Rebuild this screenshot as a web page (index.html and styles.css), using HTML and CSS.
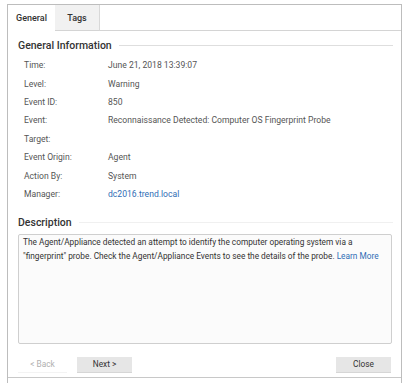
FILE: index.html
```html
<!DOCTYPE html>
<html>
<head>
<meta charset="utf-8">
<link rel="stylesheet" href="styles.css">
</head>
<body>
<div class="frame">
  <div class="tabs">
    <div class="tab active">General</div>
    <div class="tab">Tags</div>
    <div class="tab-rest"></div>
  </div>
  <div class="content">
    <div class="section-title"><span>General Information</span><div class="rule"></div></div>
    <div class="grid">
      <div class="lbl">Time:</div><div class="val">June 21, 2018 13:39:07</div>
      <div class="lbl">Level:</div><div class="val">Warning</div>
      <div class="lbl">Event ID:</div><div class="val">850</div>
      <div class="lbl">Event:</div><div class="val">Reconnaissance Detected: Computer OS Fingerprint Probe</div>
      <div class="lbl">Target:</div><div class="val"></div>
      <div class="lbl">Event Origin:</div><div class="val">Agent</div>
      <div class="lbl">Action By:</div><div class="val">System</div>
      <div class="lbl">Manager:</div><div class="val link">dc2016.trend.local</div>
    </div>
    <div class="section-title desc-title"><span>Description</span><div class="rule faint"></div></div>
    <div class="desc-box">The Agent/Appliance detected an attempt to identify the computer operating system via a "fingerprint" probe. Check the Agent/Appliance Events to see the details of the probe. <span class="link">Learn More</span></div>
  </div>
  <div class="footer">
    <div class="btn disabled">&lt; Back</div>
    <div class="btn">Next &gt;</div>
    <div class="spacer"></div>
    <div class="btn">Close</div>
  </div>
</div>
</body>
</html>
```
FILE: styles.css
```css
html, body {
  margin: 0;
  padding: 0;
  background: #fff;
}
body {
  font-family: Roboto, "Liberation Sans", sans-serif;
  color: #444;
}
.frame {
  margin: 4px 0 0 7px;
  width: 395px;
  height: 379px;
  border: 1px solid #bdbdbd;
  border-bottom: none;
  display: flex;
  flex-direction: column;
  box-sizing: border-box;
}
.tabs {
  display: flex;
  height: 26px;
  flex: none;
}
.tab {
  font-size: 9px;
  font-weight: 500;
  color: #333;
  display: flex;
  align-items: center;
  justify-content: center;
  box-sizing: border-box;
}
.tab.active {
  width: 47px;
  background: #fff;
}
.tab:not(.active) {
  width: 45px;
  background-color: #f1f1f1;
  background-image: radial-gradient(#e6e6e6 0.6px, transparent 0.7px);
  background-size: 2px 2px;
  border-right: 1px solid #d8d8d8;
  border-bottom: 1px solid #d4d4d4;
}
.tab-rest {
  flex: 1;
  border-bottom: 1px solid #d4d4d4;
}
.content {
  padding: 0 8px 0 10px;
  flex: none;
  display: flex;
  flex-direction: column;
}
.section-title {
  display: flex;
  align-items: center;
  height: 28px;
  font-size: 10.5px;
  font-weight: 500;
  color: #333;
}
.section-title .rule {
  flex: 1;
  height: 1px;
  background: #dedede;
  margin-left: 7px;
}
.section-title .rule.faint {
  background: #f0f0f0;
}
.grid {
  display: grid;
  grid-template-columns: 84px 1fr;
  grid-auto-rows: 18.4px;
  padding-left: 6px;
  font-size: 8.6px;
  color: #555;
  align-items: center;
  margin-top: -3px;
}
.link {
  color: #2f6db5;
}
.desc-title {
  margin-top: 8px;
  height: 23px;
}
.desc-box {
  height: 110px;
  box-sizing: border-box;
  margin-right: 1px;
  border: 1px solid #cfcfcf;
  border-radius: 2px;
  background-color: #fbfbfb;
  background-image: radial-gradient(#f0f0f0 0.6px, transparent 0.7px);
  background-size: 2px 2px;
  padding: 0 4px;
  font-size: 8.3px;
  line-height: 14px;
  color: #333;
}
.footer {
  display: flex;
  align-items: center;
  padding: 0 10px;
  height: 25px;
  border-bottom: 1px solid #c8c8c8;
  margin-top: 8px;
  flex: none;
}
.btn {
  width: 55px;
  height: 16px;
  display: flex;
  align-items: center;
  justify-content: center;
  font-size: 8.3px;
  color: #333;
  background: #e6e6e6;
  border-bottom: 1px solid #d6d6d6;
  box-sizing: border-box;
}
.btn.disabled {
  background: #fff;
  color: #b0b0b0;
  width: 49px;
  margin-right: 10px;
  border-bottom-color: #f3f3f3;
}
.spacer {
  flex: 1;
}
```
